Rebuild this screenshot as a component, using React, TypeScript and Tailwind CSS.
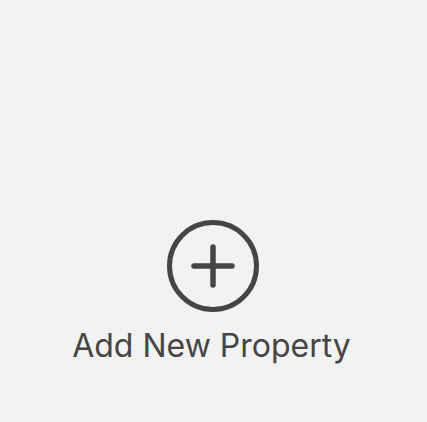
import React from 'react';

const PlusCircle: React.FC = () => (
  <svg width="94" height="94" viewBox="0 0 94 94" fill="none" className="mr-[2px]">
    <circle cx="47" cy="47" r="43.5" stroke="#454545" strokeWidth="5" />
    <path d="M28 47H66M47 28V66" stroke="#454545" strokeWidth="5.5" strokeLinecap="round" />
  </svg>
);

const App: React.FC = () => {
  return (
    <div className="w-[427px] h-[422px] bg-[#f2f2f2] flex flex-col items-center pt-[219px]" style={{ fontFamily: 'Inter, "Noto Sans", sans-serif' }}>
      <button className="flex flex-col items-center text-[#454545]">
        <PlusCircle />
        <span className="mt-[13px] mr-[4px] text-[32px] leading-[40px]">Add New Property</span>
      </button>
    </div>
  );
};

export default App;
